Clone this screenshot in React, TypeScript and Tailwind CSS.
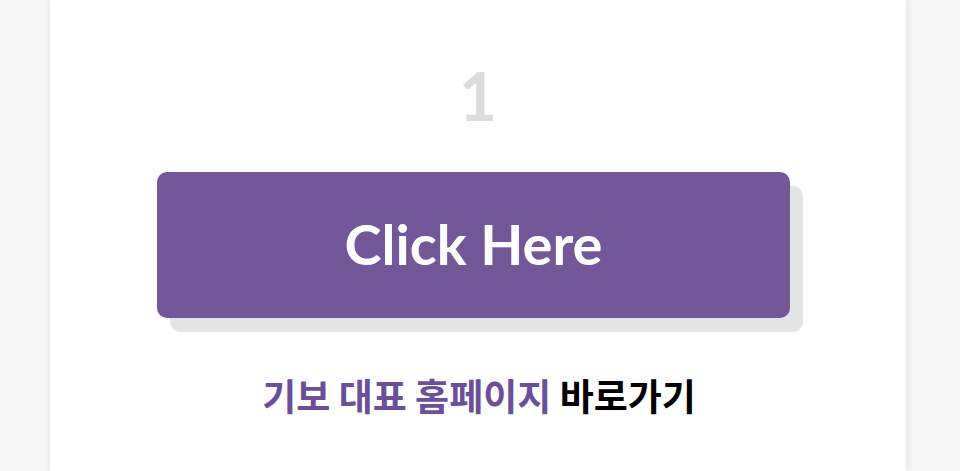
export default function App() {
  return (
    <div className="h-[471px] w-[960px] overflow-hidden bg-[#f6f6f6]">
      <div className="ml-[50px] flex h-full w-[857px] flex-col items-center border-r border-[#ededed] bg-white shadow-[0_0_6px_rgba(0,0,0,0.09)]">
        <div className="mt-[56px] h-[80px] text-[66px] font-bold leading-[80px] text-[#dcdcdc] [font-family:Lato,sans-serif]">
          1
        </div>
        <div className="relative ml-[4px] mt-[36px] h-[160px] w-[646px]">
          <div className="absolute left-[13px] top-[14px] h-[146px] w-[633px] rounded-[10px] bg-[#e5e5e5]" />
          <button className="relative flex h-[146px] w-[633px] items-center justify-center rounded-[10px] bg-[#735798] pb-[2px] text-[56px] font-bold text-white [font-family:Lato,sans-serif]">
            Click Here
          </button>
        </div>
        <p className="ml-[2px] mt-[38px] text-[37px] font-bold leading-[50px] text-black [font-family:'Noto_Sans_CJK_KR',sans-serif]">
          <span className="text-[#6b4f9a]">기보 대표 홈페이지</span> 바로가기
        </p>
      </div>
    </div>
  );
}
